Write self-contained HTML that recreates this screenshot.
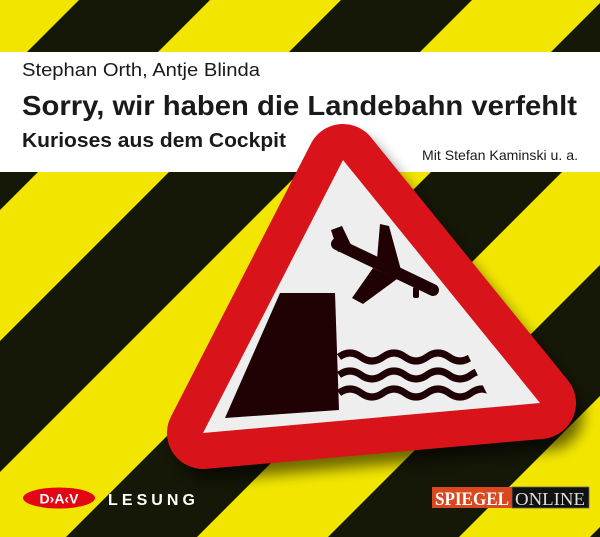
<!DOCTYPE html>
<html><head><meta charset="utf-8"><style>
html,body{margin:0;padding:0;width:600px;height:537px;overflow:hidden;background:#f2e600}
svg{display:block}
text{font-family:"Liberation Sans",sans-serif}
</style></head><body>
<svg width="600" height="537" viewBox="0 0 600 537" xmlns="http://www.w3.org/2000/svg">
<defs>
<filter id="sh" x="-20%" y="-20%" width="140%" height="140%"><feGaussianBlur stdDeviation="7"/></filter>
<clipPath id="tri"><polygon points="343,160 203,433 540,403"/></clipPath>
</defs>
<rect width="600" height="537" fill="#f2e600"/>
<g fill="#151807">
<polygon points="-445,0 -314,0 -851,537 -982,537"/>
<polygon points="-183,0 -52,0 -589,537 -720,537"/>
<polygon points="79,0 210,0 -327,537 -458,537"/>
<polygon points="341,0 472,0 -65,537 -196,537"/>
<polygon points="603,0 734,0 197,537 66,537"/>
<polygon points="865,0 996,0 459,537 328,537"/>
<polygon points="1127,0 1258,0 721,537 590,537"/>
</g>
<rect x="0" y="52" width="600" height="120" fill="#fff"/>
<text x="22" y="76" font-size="18" fill="#1a1a1a" textLength="238" lengthAdjust="spacingAndGlyphs">Stephan Orth, Antje Blinda</text>
<text x="22" y="115" font-size="28" font-weight="bold" fill="#1a1a1a" textLength="555" lengthAdjust="spacingAndGlyphs">Sorry, wir haben die Landebahn verfehlt</text>
<text x="22" y="147" font-size="20" font-weight="bold" fill="#1a1a1a" textLength="264" lengthAdjust="spacingAndGlyphs">Kurioses aus dem Cockpit</text>
<text x="422" y="160" font-size="14" fill="#1a1a1a" textLength="156" lengthAdjust="spacingAndGlyphs">Mit Stefan Kaminski u. a.</text>
<polygon points="351,172 211,445 548,415" fill="#000" opacity="0.55" stroke="#000" stroke-width="70" stroke-linejoin="round" filter="url(#sh)"/>
<polygon points="343,160 203,433 540,403" fill="#d8141a" stroke="#d8141a" stroke-width="72" stroke-linejoin="round"/>
<polygon points="343,160 203,433 540,403" fill="#eeeeee"/>
<g fill="#200204">
<polygon points="280,293 335,293 339,410 225,418"/>
<line x1="337" y1="244" x2="433" y2="290" stroke="#200204" stroke-width="12" stroke-linecap="round"/>
<polygon points="331,230 342,226 352,247 338,252"/>
<polygon points="377,259 380,224 389,226 401,270"/>
<polygon points="373,268 397,279 363,304 352,298"/>
<rect x="413" y="287" width="6" height="11" rx="2"/>
</g>
<g fill="none" stroke="#200204" stroke-width="7" clip-path="url(#tri)">
<path d="M339,357 q11,-8 22,0 t22,0 t22,0 t22,0 t22,0 t22,0 t22,0"/>
<path d="M339,375 q11,-8 22,0 t22,0 t22,0 t22,0 t22,0 t22,0 t22,0"/>
<path d="M339,393 q11,-8 22,0 t22,0 t22,0 t22,0 t22,0 t22,0 t22,0"/>
</g>
<polygon points="463,345 520,345 520,400 490,400" fill="#eeeeee" clip-path="url(#tri)"/>
<ellipse cx="59" cy="498" rx="36" ry="10.5" fill="#e30613"/>
<text x="59" y="503.5" font-size="14" font-weight="bold" fill="#fff" text-anchor="middle">D›A‹V</text>
<text x="108" y="505" font-size="16" font-weight="bold" fill="#fff" textLength="87" lengthAdjust="spacing">LESUNG</text>
<rect x="432" y="487" width="80" height="21" fill="#d9481e"/>
<text x="472" y="505" font-size="19" font-weight="bold" fill="#fff" text-anchor="middle" textLength="74" lengthAdjust="spacingAndGlyphs" style="font-family:'Liberation Serif',serif">SPIEGEL</text>
<rect x="512" y="487" width="77" height="21" fill="#111" stroke="#666" stroke-width="0.8"/>
<text x="550" y="505" font-size="18" fill="#ddd" text-anchor="middle" textLength="70" lengthAdjust="spacingAndGlyphs" style="font-family:'Liberation Serif',serif">ONLINE</text>
</svg>
</body></html>
